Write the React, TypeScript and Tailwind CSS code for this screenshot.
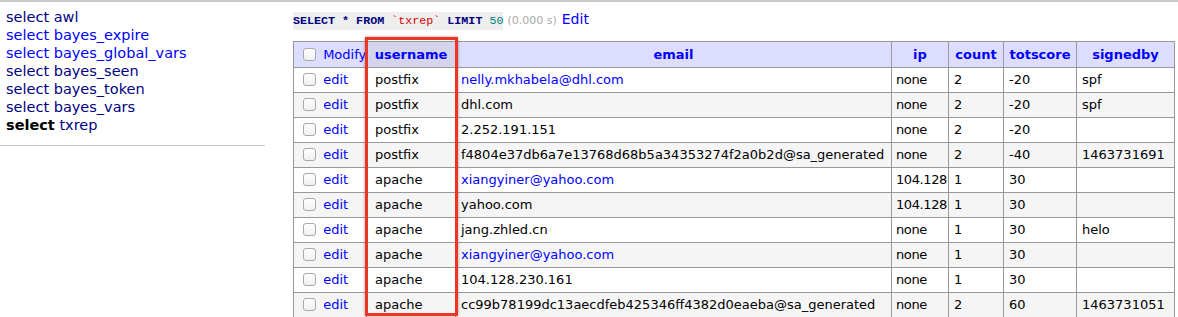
const tables = [
  { name: "awl", visited: true },
  { name: "bayes_expire", visited: false },
  { name: "bayes_global_vars", visited: false },
  { name: "bayes_seen", visited: true },
  { name: "bayes_token", visited: true },
  { name: "bayes_vars", visited: true },
];

interface Row {
  username: string;
  email: string;
  emailLink?: boolean;
  ip: string;
  count: string;
  totscore: string;
  signedby: string;
}

const rows: Row[] = [
  { username: "postfix", email: "nelly.mkhabela@dhl.com", emailLink: true, ip: "none", count: "2", totscore: "-20", signedby: "spf" },
  { username: "postfix", email: "dhl.com", ip: "none", count: "2", totscore: "-20", signedby: "spf" },
  { username: "postfix", email: "2.252.191.151", ip: "none", count: "2", totscore: "-20", signedby: "" },
  { username: "postfix", email: "f4804e37db6a7e13768d68b5a34353274f2a0b2d@sa_generated", ip: "none", count: "2", totscore: "-40", signedby: "1463731691" },
  { username: "apache", email: "xiangyiner@yahoo.com", emailLink: true, ip: "104.128", count: "1", totscore: "30", signedby: "" },
  { username: "apache", email: "yahoo.com", ip: "104.128", count: "1", totscore: "30", signedby: "" },
  { username: "apache", email: "jang.zhled.cn", ip: "none", count: "1", totscore: "30", signedby: "helo" },
  { username: "apache", email: "xiangyiner@yahoo.com", emailLink: true, ip: "none", count: "1", totscore: "30", signedby: "" },
  { username: "apache", email: "104.128.230.161", ip: "none", count: "1", totscore: "30", signedby: "" },
  { username: "apache", email: "cc99b78199dc13aecdfeb425346ff4382d0eaeba@sa_generated", ip: "none", count: "2", totscore: "60", signedby: "1463731051" },
];

function Checkbox() {
  return (
    <span className="inline-block w-[13px] h-[13px] rounded-[3px] border border-[#a9a9a9] bg-gradient-to-b from-white to-[#f0f0f0] align-[-2px]" />
  );
}

export default function App() {
  return (
    <div
      className="h-[317px] w-[1178px] overflow-hidden bg-white border-t-2 border-[#c8c8c8] flex text-[13px] leading-[18px] text-black"
      style={{ fontFamily: '"DejaVu Sans", Verdana, sans-serif' }}
    >
      {/* menu */}
      <div className="w-[293px] shrink-0 pt-[6px]">
        <div className="pl-[6px] text-[14.5px] leading-[18px]">
          {tables.map((t) => (
            <div key={t.name}>
              <a className={t.visited ? "text-[#000080]" : "text-[#0000ff]"}>select {t.name}</a>
            </div>
          ))}
          <div className="text-[#000080]">
            <b className="text-black">select</b> txrep
          </div>
        </div>
        <div className="mt-[11px] w-[265px] border-t border-[#c8c8c8]" />
      </div>

      {/* content */}
      <div className="flex-1 pt-[8px]">
        <div className="flex items-baseline h-[24px] leading-[18px]">
          <code
            className="bg-[#eeeeee] text-[11.7px] font-bold text-[#000080]"
            style={{ fontFamily: '"Liberation Mono", "Courier New", monospace' }}
          >
            SELECT * FROM <span className="text-[#dd0000] font-normal">`txrep`</span> LIMIT{" "}
            <span className="text-[#008080] font-normal">50</span>
          </code>
          <span className="ml-[4px] text-[11px] text-[#aaaaaa]">(0.000 s)</span>
          <a className="ml-[5px] text-[14px] text-[#0000ff]">Edit</a>
        </div>

        <div className="relative mt-[7px]">
          <table className="table-fixed border-collapse w-[881px]">
            <colgroup>
              <col className="w-[73px]" />
              <col className="w-[89px]" />
              <col className="w-[436px]" />
              <col className="w-[57px]" />
              <col className="w-[55px]" />
              <col className="w-[73px]" />
              <col className="w-[98px]" />
            </colgroup>
            <thead>
              <tr className="bg-[#ddddff] h-[26px]">
                <td className="border border-[#999999] pl-[9px] text-left whitespace-nowrap">
                  <Checkbox /> <a className="ml-[3px] text-[#0000ff]">Modify</a>
                </td>
                <th className="border border-[#999999] bg-[#d4d4ec] text-[#0000ff] font-bold">username</th>
                <th className="border border-[#999999] text-[#0000ff] font-bold">email</th>
                <th className="border border-[#999999] text-[#0000ff] font-bold">ip</th>
                <th className="border border-[#999999] text-[#0000ff] font-bold">count</th>
                <th className="border border-[#999999] text-[#0000ff] font-bold">totscore</th>
                <th className="border border-[#999999] text-[#0000ff] font-bold">signedby</th>
              </tr>
            </thead>
            <tbody>
              {rows.map((r, i) => (
                <tr key={i} className={`h-[25px] ${i % 2 === 1 ? "bg-[#f5f5f5]" : "bg-white"}`}>
                  <td className="border border-[#999999] pl-[9px] whitespace-nowrap">
                    <Checkbox /> <a className="ml-[3px] text-[#0000ff]">edit</a>
                  </td>
                  <td className="border border-[#999999] pl-[8px]">{r.username}</td>
                  <td className="border border-[#999999] pl-[5px] whitespace-nowrap overflow-hidden">
                    {r.emailLink ? <a className="text-[#0000ff]">{r.email}</a> : r.email}
                  </td>
                  <td className="border border-[#999999] pl-[4px] pr-0 whitespace-nowrap tracking-[-0.4px]">{r.ip}</td>
                  <td className="border border-[#999999] pl-[5px]">{r.count}</td>
                  <td className="border border-[#999999] pl-[5px]">{r.totscore}</td>
                  <td className="border border-[#999999] pl-[5px]">{r.signedby}</td>
                </tr>
              ))}
            </tbody>
          </table>

          {/* annotation box around the username column */}
          <div className="absolute left-[72px] top-[-4px] w-[93px] h-[279px] border-[3px] border-[#ee3523] shadow-[0_0_3px_rgba(0,0,0,0.35)]" />
        </div>
      </div>
    </div>
  );
}
